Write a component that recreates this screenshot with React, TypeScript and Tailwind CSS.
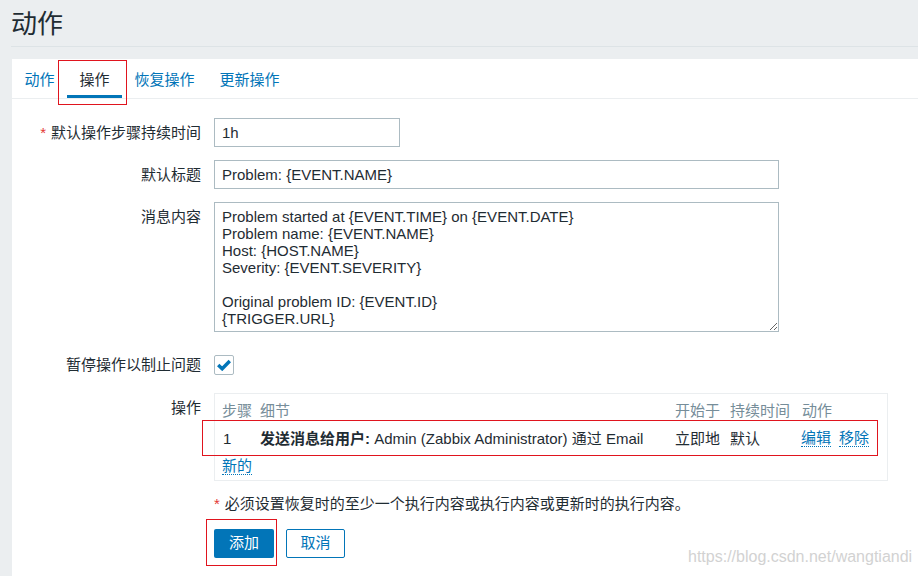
import React from "react";

const font = "font-['Liberation_Sans','Noto_Sans_CJK_SC',sans-serif]";

export default function App() {
  return (
    <div className={`relative w-[918px] h-[576px] overflow-hidden bg-[#ebeef0] flex flex-col text-[#1f2c33] ${font}`}>
      {/* Header */}
      <div className="pl-[11px]">
        <h1 className="h-[47px] border-b border-[#dde3e6] flex items-center pt-[2px] text-[26px] leading-none">动作</h1>
      </div>

      {/* Panel */}
      <div className="ml-[12px] mt-[12px] flex-1 bg-white flex flex-col">
        {/* Tabs */}
        <div className="flex h-[40px] border-b border-[#ebeef0] text-[15px]">
          <div className="h-[39px] px-[12.5px] pt-[6px] border-b-[3px] border-transparent flex items-center text-[#0275b8]">动作</div>
          <div className="h-[39px] px-[12.5px] pt-[6px] border-b-[3px] border-[#0275b8] flex items-center text-[#1f2c33]">操作</div>
          <div className="h-[39px] px-[12.5px] pt-[6px] border-b-[3px] border-transparent flex items-center text-[#0275b8]">恢复操作</div>
          <div className="h-[39px] px-[12.5px] pt-[6px] border-b-[3px] border-transparent flex items-center text-[#0275b8]">更新操作</div>
        </div>

        {/* Form */}
        <div className="pt-[19px] flex flex-col text-[15px]">
          <div className="flex gap-[13px]">
            <div className="w-[189px] text-right leading-[29px]">
              <span className="text-[#e33734] mr-[5px]">*</span>默认操作步骤持续时间
            </div>
            <input readOnly value="1h" className={`h-[29px] w-[186px] border border-[#acbbc2] px-[7px] text-[15px] text-[#1f2c33] outline-none ${font}`} />
          </div>

          <div className="flex gap-[13px] mt-[13px]">
            <div className="w-[189px] text-right leading-[29px]">默认标题</div>
            <input readOnly value="Problem: {EVENT.NAME}" className={`h-[29px] w-[565px] border border-[#acbbc2] px-[7px] text-[15px] text-[#1f2c33] outline-none ${font}`} />
          </div>

          <div className="flex gap-[13px] mt-[13px]">
            <div className="w-[189px] text-right leading-[17px] pt-[6px]">消息内容</div>
            <textarea
              readOnly
              value={"Problem started at {EVENT.TIME} on {EVENT.DATE}\nProblem name: {EVENT.NAME}\nHost: {HOST.NAME}\nSeverity: {EVENT.SEVERITY}\n\nOriginal problem ID: {EVENT.ID}\n{TRIGGER.URL}"}
              className={`h-[130px] w-[565px] border border-[#acbbc2] px-[7px] pt-[5px] text-[15px] leading-[17px] text-[#1f2c33] outline-none ${font}`}
            />
          </div>

          <div className="flex gap-[13px] mt-[18px] h-[29px] items-center">
            <div className="w-[189px] text-right leading-[17px]">暂停操作以制止问题</div>
            <div className="w-[20px] h-[20px] border border-[#acbbc2] rounded-[2px] flex items-center justify-center">
              <svg width="14" height="12" viewBox="0 0 14 12">
                <path d="M1.2 6 L5.2 9.8 L12.8 2" fill="none" stroke="#0275b8" strokeWidth="3.4" strokeLinecap="butt" strokeLinejoin="miter" />
              </svg>
            </div>
          </div>

          <div className="flex gap-[13px] mt-[14px]">
            <div className="w-[189px] text-right leading-[17px] pt-[6px]">操作</div>
            <div className="w-[674px] border border-[#ebeef0] pt-[2px] pb-[1px] pl-[7px]">
              <div className="grid grid-cols-[38px_415px_55px_72px_1fr] h-[28px] items-center text-[#768d99] leading-[17px]">
                <div>步骤</div>
                <div>细节</div>
                <div>开始于</div>
                <div>持续时间</div>
                <div>动作</div>
              </div>
              <div className="grid grid-cols-[38px_415px_55px_72px_1fr] h-[28px] items-center leading-[17px]">
                <div className="pl-[1px]">1</div>
                <div className="whitespace-nowrap"><span className="font-bold">发送消息给用户:</span> Admin (Zabbix Administrator) 通过 Email</div>
                <div>立即地</div>
                <div>默认</div>
                <div className="flex gap-[8px] -ml-[1px]">
                  <span className="text-[#0275b8] border-b border-dotted border-[#0275b8] leading-[17px]">编辑</span>
                  <span className="text-[#0275b8] border-b border-dotted border-[#0275b8] leading-[17px]">移除</span>
                </div>
              </div>
              <div className="h-[27px] flex items-center">
                <span className="text-[#0275b8] border-b border-dotted border-[#0275b8] leading-[17px]">新的</span>
              </div>
            </div>
          </div>

          <div className="ml-[202px] mt-[14px] leading-[17px]">
            <span className="text-[#e33734] mr-[5px]">*</span>必须设置恢复时的至少一个执行内容或执行内容或更新时的执行内容。
          </div>

          <div className="ml-[202px] mt-[17px] flex gap-[12px]">
            <div className="w-[60px] h-[29px] bg-[#0275b8] text-white rounded-[2px] flex items-center justify-center">添加</div>
            <div className="w-[59px] h-[29px] border border-[#0275b8] text-[#0275b8] rounded-[2px] flex items-center justify-center">取消</div>
          </div>
        </div>
      </div>

      {/* Red annotation boxes */}
      <div className="absolute left-[58px] top-[60px] w-[69px] h-[45px] border border-[#e0141e]" />
      <div className="absolute left-[202px] top-[420px] w-[676px] h-[36px] border border-[#e0141e]" />
      <div className="absolute left-[206px] top-[519px] w-[71px] h-[47px] border border-[#e0141e]" />

      {/* Watermark */}
      <div className="absolute left-[688px] top-[547px] text-[16px] leading-[20px] text-[#d2d2d2] font-['Liberation_Sans',sans-serif]">https://blog.csdn.net/wangtiandi</div>
    </div>
  );
}
